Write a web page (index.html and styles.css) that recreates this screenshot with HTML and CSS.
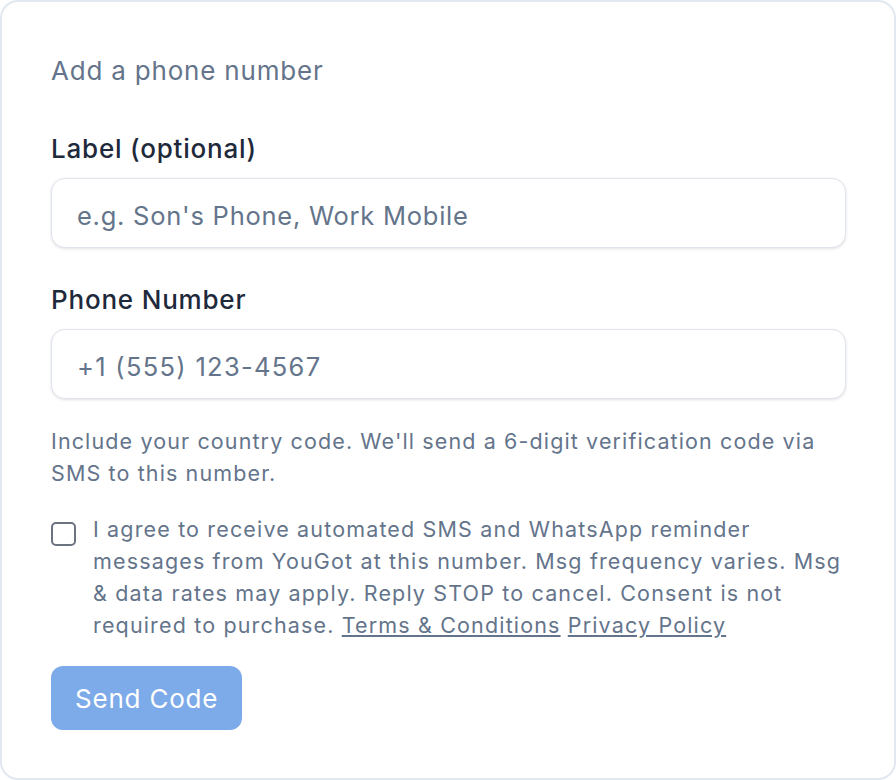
FILE: index.html
```html
<!DOCTYPE html>
<html lang="en">
<head>
<meta charset="utf-8">
<title>Add a phone number</title>
<link rel="stylesheet" href="styles.css">
</head>
<body>
<div class="card">
  <h2 class="title">Add a phone number</h2>
  <form class="form">
    <div class="field">
      <label class="label" for="lbl">Label (optional)</label>
      <input class="input" id="lbl" type="text" placeholder="e.g. Son's Phone, Work Mobile">
    </div>
    <div class="field">
      <label class="label" for="phone">Phone Number</label>
      <input class="input" id="phone" type="tel" placeholder="+1 (555) 123-4567">
      <p class="help">Include your country code. We'll send a 6-digit verification code via SMS to this number.</p>
    </div>
    <label class="consent">
      <span class="box"></span>
      <span class="consent-text">I agree to receive automated SMS and WhatsApp reminder messages from YouGot at this number. Msg frequency varies. Msg &amp; data rates may apply. Reply STOP to cancel. Consent is not required to purchase. <a href="#">Terms &amp; Conditions</a> <a href="#">Privacy Policy</a></span>
    </label>
    <div class="actions">
      <button class="btn" type="button">Send Code</button>
    </div>
  </form>
</div>
</body>
</html>
```

FILE: styles.css
```css
* { box-sizing: border-box; }
html, body { margin: 0; padding: 0; background: #ffffff; }
body {
  font-family: Inter, "Noto Sans", "Liberation Sans", sans-serif;
  width: 896px;
  height: 780px;
}
.card {
  width: 896px;
  height: 780px;
  border: 2px solid #e2e8f0;
  border-radius: 18px;
  background: #ffffff;
  padding: 51px 49px 0 49px;
}
.title {
  margin: 0;
  font-size: 26px;
  letter-spacing: 0.8px;
  line-height: 36px;
  font-weight: 400;
  color: #64748b;
}
.form {
  margin-top: 44px;
  display: flex;
  flex-direction: column;
}
.field { display: flex; flex-direction: column; }
.field + .field { margin-top: 36px; }
.label {
  font-size: 26px;
  letter-spacing: 0.8px;
  line-height: 32px;
  font-weight: 500;
  color: #1e293b;
  margin-bottom: 13px;
}
.input {
  width: 795px;
  height: 70px;
  border: 1px solid #dfe4ec;
  border-radius: 14px;
  padding: 5px 25px 0 25px;
  font-family: inherit;
  font-size: 25.5px;
  letter-spacing: 0.75px;
  color: #1e293b;
  background: #fff;
  box-shadow: 0 1px 3px rgba(15, 23, 42, 0.12);
  outline: none;
}
.input[type="tel"] { letter-spacing: 1.3px; }
.input::placeholder { color: #64748b; opacity: 1; }
.help {
  margin: 26px 0 0 0;
  font-size: 21.5px;
  letter-spacing: 1.12px;
  line-height: 32px;
  color: #64748b;
}
.consent {
  margin-top: 24px;
  display: flex;
  gap: 17px;
  align-items: flex-start;
}
.box {
  flex: none;
  width: 25px;
  height: 24px;
  margin-top: 9px;
  border: 2px solid #6b7280;
  border-radius: 5px;
  background: #fff;
}
.consent-text {
  font-size: 21.5px;
  letter-spacing: 1.15px;
  line-height: 32px;
  color: #64748b;
}
.consent-text a { color: inherit; text-decoration: underline; }
.actions { margin-top: 25px; }
.btn {
  height: 64px;
  padding: 0 24px;
  border: none;
  border-radius: 12px;
  background: #7daae8;
  color: #ffffff;
  font-family: inherit;
  font-size: 26px;
  letter-spacing: 0.8px;
  font-weight: 400;
}
```
